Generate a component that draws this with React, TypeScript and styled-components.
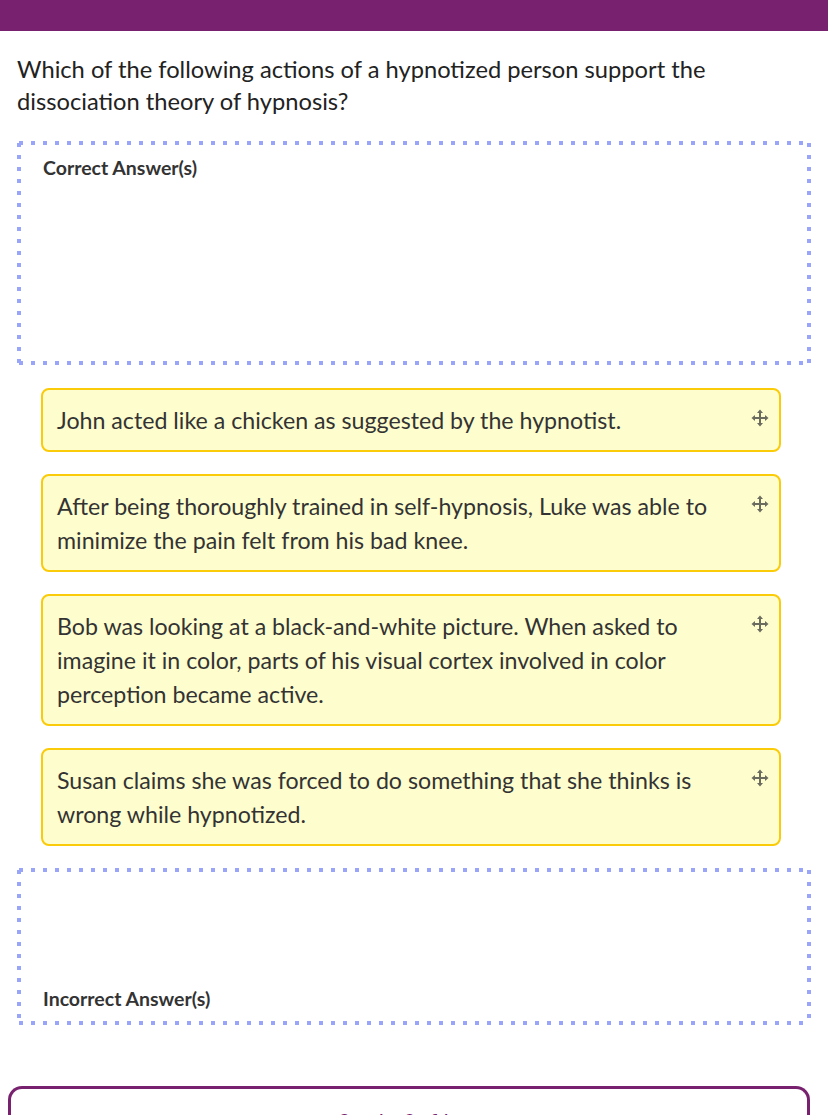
import styled, { createGlobalStyle } from "styled-components";

const Global = createGlobalStyle`
	html, body {
		margin: 0;
		padding: 0;
		background: #ffffff;
	}
	body {
		font-family: Lato, "Liberation Sans", sans-serif;
		color: #333333;
	}
`;

const TopBar = styled.header`
	height: 31px;
	background: #78226f;
`;

const Main = styled.main`
	padding: 23px 17px 0 17px;
`;

const Pergunta = styled.h1`
	margin: 0 0 23px 0;
	font-size: 23.7px;
	line-height: 32px;
	font-weight: 400;
	color: #222222;
	position: relative;
	top: -1px;
`;

const dash = "#98a5f8";

const Zona = styled.section<{ $rodape?: boolean }>`
	box-sizing: border-box;
	height: ${(p) => (p.$rodape ? "157px" : "224px")};
	padding: ${(p) => (p.$rodape ? "0 22px 14px 26px" : "15px 22px 0 26px")};
	display: flex;
	flex-direction: column;
	justify-content: ${(p) => (p.$rodape ? "flex-end" : "flex-start")};
	background-image:
		linear-gradient(to right, ${dash} 4px, transparent 4px),
		linear-gradient(to right, ${dash} 4px, transparent 4px),
		linear-gradient(to bottom, ${dash} 4px, transparent 4px),
		linear-gradient(to bottom, ${dash} 4px, transparent 4px);
	background-size: 12px 4px, 12px 4px, 4px 12px, 4px 12px;
	background-position: 2px 0, 2px 100%, 0 2px, 100% 2px;
	background-repeat: repeat-x, repeat-x, repeat-y, repeat-y;
`;

const Rotulo = styled.h2`
	margin: 0;
	font-size: 19.5px;
	line-height: 24px;
	font-weight: 700;
	color: #333333;
`;

const Lista = styled.div`
	display: flex;
	flex-direction: column;
	gap: 22px;
	margin: 23px 30px 22px 24px;
`;

const Cartao = styled.div`
	position: relative;
	border: 2px solid #f9cb08;
	border-radius: 8px;
	background: #fefdcd;
	padding: 13px 62px 13px 14px;
	font-size: 23.2px;
	line-height: 34px;
	color: #333333;
`;

const Alca = styled.span`
	position: absolute;
	top: 11px;
	right: 10px;
	width: 18px;
	height: 18px;
	color: #6b6b60;
`;

const Painel = styled.section`
	margin: 61px 1px 0 -9px;
	height: 60px;
	border: 3px solid #78226f;
	border-bottom: none;
	border-radius: 14px 14px 0 0;
	text-align: center;
	padding-top: 20px;
	box-sizing: border-box;
`;

const PainelTitulo = styled.span`
	font-size: 15px;
	font-weight: 700;
	color: #78226f;
`;

const IconeMover = () => (
	<svg viewBox="0 0 18 18" width="18" height="18" fill="currentColor">
		<rect x="8" y="3" width="2" height="12" />
		<rect x="3" y="8" width="12" height="2" />
		<path d="M9 0.5 L12 4 H6 Z" />
		<path d="M9 17.5 L12 14 H6 Z" />
		<path d="M0.5 9 L4 6 V12 Z" />
		<path d="M17.5 9 L14 6 V12 Z" />
	</svg>
);

const respostas = [
	"John acted like a chicken as suggested by the hypnotist.",
	"After being thoroughly trained in self-hypnosis, Luke was able to minimize the pain felt from his bad knee.",
	"Bob was looking at a black-and-white picture. When asked to imagine it in color, parts of his visual cortex involved in color perception became active.",
	"Susan claims she was forced to do something that she thinks is wrong while hypnotized.",
];

const App = () => {
	return (
		<>
			<Global />
			<TopBar />
			<Main>
				<Pergunta>
					Which of the following actions of a hypnotized person support the dissociation theory of hypnosis?
				</Pergunta>

				<Zona>
					<Rotulo>Correct Answer(s)</Rotulo>
				</Zona>

				<Lista>
					{respostas.map((r) => (
						<Cartao key={r}>
							{r}
							<Alca>
								<IconeMover />
							</Alca>
						</Cartao>
					))}
				</Lista>

				<Zona $rodape>
					<Rotulo>Incorrect Answer(s)</Rotulo>
				</Zona>

				<Painel>
					<PainelTitulo>Question Confidence</PainelTitulo>
				</Painel>
			</Main>
		</>
	);
};

export default App;
